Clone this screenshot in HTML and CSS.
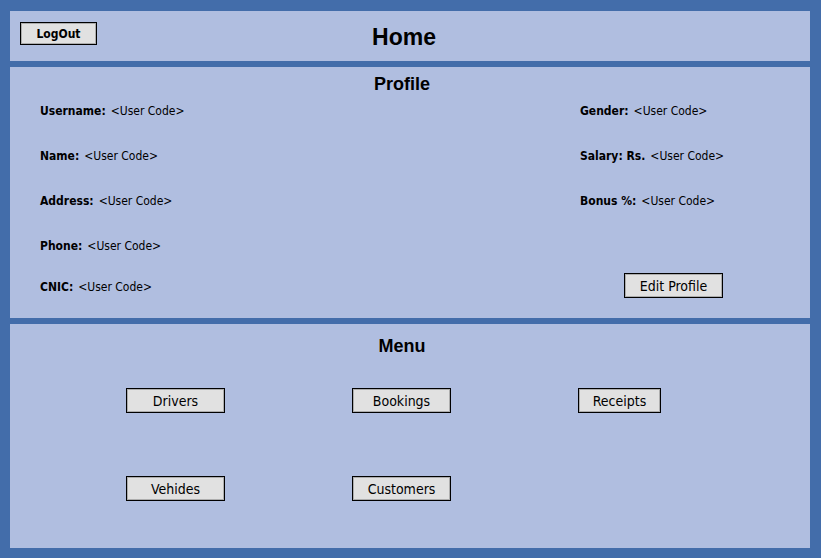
FILE: index.html
```html
<!DOCTYPE html>
<html>
<head>
<meta charset="utf-8">
<link rel="stylesheet" href="styles.css">
</head>
<body>
<div class="page">
  <header class="panel header">
    <div class="header-left"><button class="btn btn-logout">LogOut</button></div>
    <h1 class="title-home">Home</h1>
    <div></div>
  </header>
  <section class="panel profile">
    <h2 class="section-title">Profile</h2>
    <div class="profile-body">
      <div class="col col-left">
        <div class="field f1"><span class="lbl">Username:</span><span class="val">&lt;User Code&gt;</span></div>
        <div class="field f2"><span class="lbl">Name:</span><span class="val">&lt;User Code&gt;</span></div>
        <div class="field f2"><span class="lbl">Address:</span><span class="val">&lt;User Code&gt;</span></div>
        <div class="field f2"><span class="lbl">Phone:</span><span class="val">&lt;User Code&gt;</span></div>
        <div class="field f3"><span class="lbl">CNIC:</span><span class="val">&lt;User Code&gt;</span></div>
      </div>
      <div class="col col-right">
        <div class="field f1"><span class="lbl">Gender:</span><span class="val">&lt;User Code&gt;</span></div>
        <div class="field f2"><span class="lbl">Salary: Rs.</span><span class="val">&lt;User Code&gt;</span></div>
        <div class="field f2"><span class="lbl">Bonus %:</span><span class="val">&lt;User Code&gt;</span></div>
        <button class="btn btn-edit">Edit Profile</button>
      </div>
    </div>
  </section>
  <section class="panel menu">
    <h2 class="section-title menu-title">Menu</h2>
    <div class="menu-grid">
      <button class="btn btn-menu">Drivers</button>
      <button class="btn btn-menu">Bookings</button>
      <button class="btn btn-menu btn-narrow">Receipts</button>
      <button class="btn btn-menu">Vehides</button>
      <button class="btn btn-menu">Customers</button>
    </div>
  </section>
</div>
</body>
</html>
```
FILE: styles.css
```css
* { box-sizing: border-box; }
html, body { margin: 0; padding: 0; }
body {
  background: #436daa;
  width: 821px;
  height: 558px;
  overflow: hidden;
  font-family: "DejaVu Sans Condensed", "DejaVu Sans", sans-serif;
  font-stretch: condensed;
  color: #000;
}
.page {
  display: flex;
  flex-direction: column;
  gap: 6px;
  padding: 11px 11px 10px 10px;
  height: 558px;
}
.panel { background: #b0bee0; }

.header {
  height: 50px;
  display: grid;
  grid-template-columns: 1fr auto 1fr;
  align-items: start;
  padding: 11px 10px 0 10px;
}
.title-home {
  margin: 0 12px 0 0;
  padding-top: 2px;
  font-family: "Liberation Sans", Arial, sans-serif;
  font-stretch: normal;
  font-weight: bold;
  font-size: 23px;
  line-height: 26px;
}

.btn {
  font-family: "DejaVu Sans Condensed", "DejaVu Sans", sans-serif;
  font-stretch: condensed;
  background: #e1e1e1;
  border: 1px solid #000;
  box-shadow: inset 0 0 0 1px #adadad;
  color: #000;
  padding: 0;
  margin: 0;
  border-radius: 0;
}
.btn-logout {
  width: 77px;
  height: 23px;
  font-size: 12px;
  font-weight: bold;
}

.profile {
  height: 251px;
  padding-top: 7px;
}
.section-title {
  margin: 0;
  text-align: center;
  padding-right: 16px;
  font-family: "Liberation Sans", Arial, sans-serif;
  font-stretch: normal;
  font-weight: bold;
  font-size: 18px;
  line-height: 20px;
}
.profile-body {
  display: grid;
  grid-template-columns: 540px 1fr;
  padding-left: 30px;
  margin-top: 10px;
}
.col { display: flex; flex-direction: column; }
.field {
  font-size: 12px;
  line-height: 14px;
  height: 14px;
  white-space: nowrap;
}
.f2 { margin-top: 31px; }
.f3 { margin-top: 27px; }
.lbl { font-weight: bold; margin-right: 5px; }
.btn-edit {
  margin-top: 65px;
  margin-left: 44px;
  width: 99px;
  height: 25px;
  font-size: 14px;
}

.menu {
  flex: 1;
  padding-top: 12px;
}
.menu-grid {
  display: grid;
  grid-template-columns: repeat(3, 226px);
  grid-auto-rows: 25px;
  row-gap: 63px;
  padding-left: 116px;
  margin-top: 32px;
}
.btn-menu {
  width: 99px;
  height: 25px;
  font-size: 14px;
}
.btn-narrow { width: 83px; }
```
